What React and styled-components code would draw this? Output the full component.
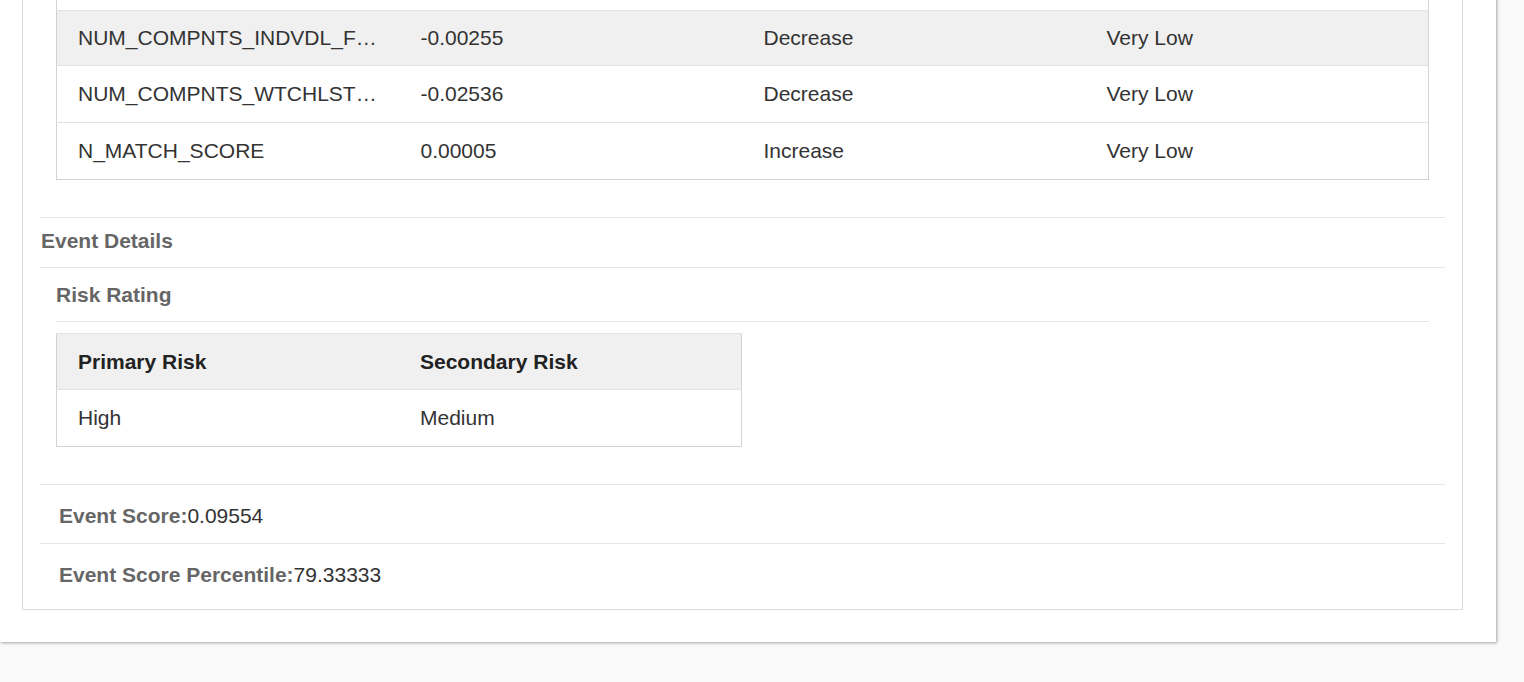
import React from "react";
import styled, { createGlobalStyle } from "styled-components";

const Global = createGlobalStyle`
  html, body { margin: 0; padding: 0; background: #fafafa; }
  body { font-family: "Liberation Sans", Arial, sans-serif; font-size: 21px; color: #333; overflow: hidden; }
`;

const Viewport = styled.div`
  width: 1524px;
  height: 682px;
  overflow: hidden;
`;

const Card = styled.div`
  width: 1496px;
  box-sizing: border-box;
  margin-top: -47px;
  background: #fff;
  padding: 0 33px 32px 22px;
  box-shadow: 1px 1px 3px rgba(0, 0, 0, 0.35);
`;

const Panel = styled.div`
  border: 1px solid #dcdcdc;
  border-top: none;
  padding: 0 17px 7px 17px;
`;

const Indent = styled.div`
  padding: 0 16px;
`;

const DataTable = styled.table`
  width: ${(p) => p.$width || "100%"};
  table-layout: fixed;
  border-collapse: collapse;
  border: 1px solid #d2d2d2;
  margin-top: ${(p) => p.$mt || 0}px;
  margin-bottom: 37px;
`;

const Row = styled.tr`
  background: ${(p) => (p.$shaded ? "#f0f0f0" : "#fff")};
`;

const Cell = styled.td`
  height: ${(p) => p.$h || 56}px;
  padding: 0 21px;
  border-top: 1px solid #e2e2e2;
  white-space: nowrap;
  overflow: hidden;
  text-overflow: ellipsis;
  font-weight: ${(p) => (p.$head ? 700 : 400)};
  color: ${(p) => (p.$head ? "#222" : "#333")};
  text-align: left;
`;

const SectionHeader = styled.div`
  border-top: 1px solid #e6e6e6;
  height: 46px;
  padding: 0 0 3px 1px;
  display: flex;
  align-items: center;
  font-weight: 700;
  color: #666;
`;

const SubSection = styled.div`
  border-top: 1px solid #e6e6e6;
  padding: 0 16px;
`;

const SubHeader = styled.div`
  height: 53px;
  display: flex;
  align-items: center;
  border-bottom: 1px solid #e6e6e6;
  font-weight: 700;
  color: #666;
`;

const ScoreRow = styled.div`
  border-top: 1px solid #e6e6e6;
  height: 54px;
  padding: 4px 0 0 19px;
  display: flex;
  align-items: center;
`;

const Label = styled.span`
  font-weight: 700;
  color: #666;
`;

const Value = styled.span`
  color: #333;
`;

const features = [
  { name: "NUM_COMPNTS_CNTRY_RISK_LEVEL", value: "0.01842", dir: "Increase", impact: "Low" },
  { name: "NUM_COMPNTS_INDVDL_FLAGGED", value: "-0.00255", dir: "Decrease", impact: "Very Low", shaded: true },
  { name: "NUM_COMPNTS_WTCHLST_MATCH", value: "-0.02536", dir: "Decrease", impact: "Very Low" },
  { name: "N_MATCH_SCORE", value: "0.00005", dir: "Increase", impact: "Very Low" },
];

export default function App() {
  return (
    <Viewport>
      <Global />
      <Card>
        <Panel>
          <Indent>
            <DataTable>
              <tbody>
                {features.map((f) => {
                  const h = f.shaded ? 54 : 56;
                  return (
                    <Row key={f.name} $shaded={f.shaded}>
                      <Cell $h={h}>{f.name}</Cell>
                      <Cell $h={h}>{f.value}</Cell>
                      <Cell $h={h}>{f.dir}</Cell>
                      <Cell $h={h}>{f.impact}</Cell>
                    </Row>
                  );
                })}
              </tbody>
            </DataTable>
          </Indent>
          <SectionHeader>Event Details</SectionHeader>
          <SubSection>
            <SubHeader>Risk Rating</SubHeader>
            <DataTable $width="686px" $mt={11}>
              <tbody>
                <Row $shaded>
                  <Cell $head $h={55}>Primary Risk</Cell>
                  <Cell $head $h={55}>Secondary Risk</Cell>
                </Row>
                <Row>
                  <Cell>High</Cell>
                  <Cell>Medium</Cell>
                </Row>
              </tbody>
            </DataTable>
          </SubSection>
          <ScoreRow>
            <Label>Event Score:</Label>
            <Value>0.09554</Value>
          </ScoreRow>
          <ScoreRow>
            <Label>Event Score Percentile:</Label>
            <Value>79.33333</Value>
          </ScoreRow>
        </Panel>
      </Card>
    </Viewport>
  );
}
